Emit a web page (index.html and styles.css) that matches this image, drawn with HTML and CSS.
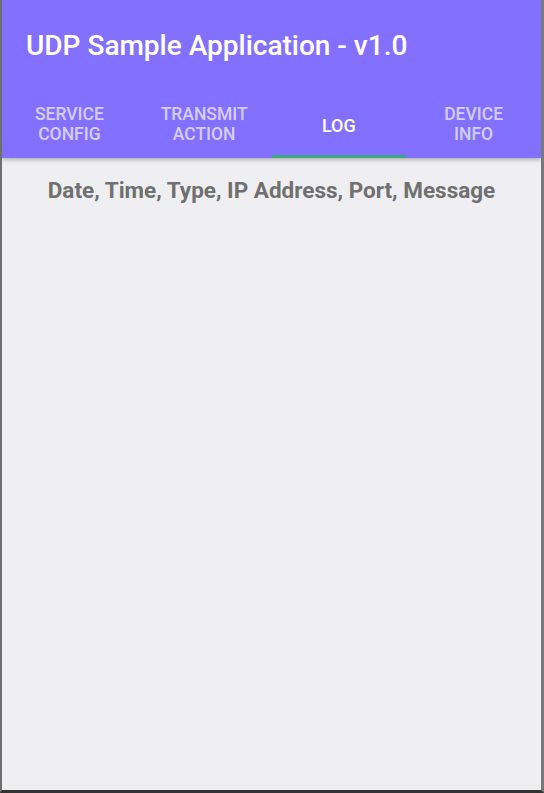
FILE: index.html
```html
<!DOCTYPE html>
<html>
<head>
<meta charset="utf-8">
<link rel="stylesheet" href="styles.css">
</head>
<body>
<div class="frame">
  <header class="appbar">
    <h1 class="title">UDP Sample Application - v1.0</h1>
    <nav class="tabs">
      <div class="tab">SERVICE<br>CONFIG</div>
      <div class="tab">TRANSMIT<br>ACTION</div>
      <div class="tab active">LOG</div>
      <div class="tab">DEVICE<br>INFO</div>
    </nav>
  </header>
  <main class="content">
    <div class="loghead">Date, Time, Type, IP Address, Port, Message</div>
  </main>
</div>
</body>
</html>
```
FILE: styles.css
```css
html, body {
  margin: 0;
  padding: 0;
  height: 100%;
}
body {
  background: #333;
  font-family: Roboto, "Noto Sans", sans-serif;
}
.frame {
  box-sizing: border-box;
  height: 793px;
  width: 544px;
  border-left: 2px solid #6f6f6f;
  border-right: 3px solid #7a7a7a;
  border-bottom: 3px solid #333;
  background: #efeff1;
  display: flex;
  flex-direction: column;
  overflow: hidden;
}
.appbar {
  background: #8470ff;
  height: 158px;
  display: flex;
  flex-direction: column;
  box-shadow: 0 2px 4px rgba(0,0,0,0.25);
  position: relative;
  z-index: 1;
}
.title {
  margin: 0;
  padding: 28px 0 0 24px;
  box-sizing: border-box;
  font-size: 28px;
  font-weight: 500;
  color: #fff;
  line-height: 36px;
}
.tabs {
  display: grid;
  grid-template-columns: repeat(4, 1fr);
  height: 62px;
  margin-top: auto;
}
.tab {
  display: flex;
  align-items: center;
  justify-content: center;
  text-align: center;
  font-size: 17.5px;
  font-weight: 500;
  line-height: 20px;
  color: rgba(255,255,255,0.68);
  border-bottom: 3px solid transparent;
  padding-bottom: 4px;
}
.tab.active {
  color: #fff;
  font-size: 18px;
  padding-bottom: 0;
  border-bottom-color: #3fa58a;
}
.content {
  flex: 1;
  padding-top: 18px;
}
.loghead {
  text-align: center;
  font-size: 22.5px;
  font-weight: 700;
  color: #707070;
  line-height: 28px;
}
```
